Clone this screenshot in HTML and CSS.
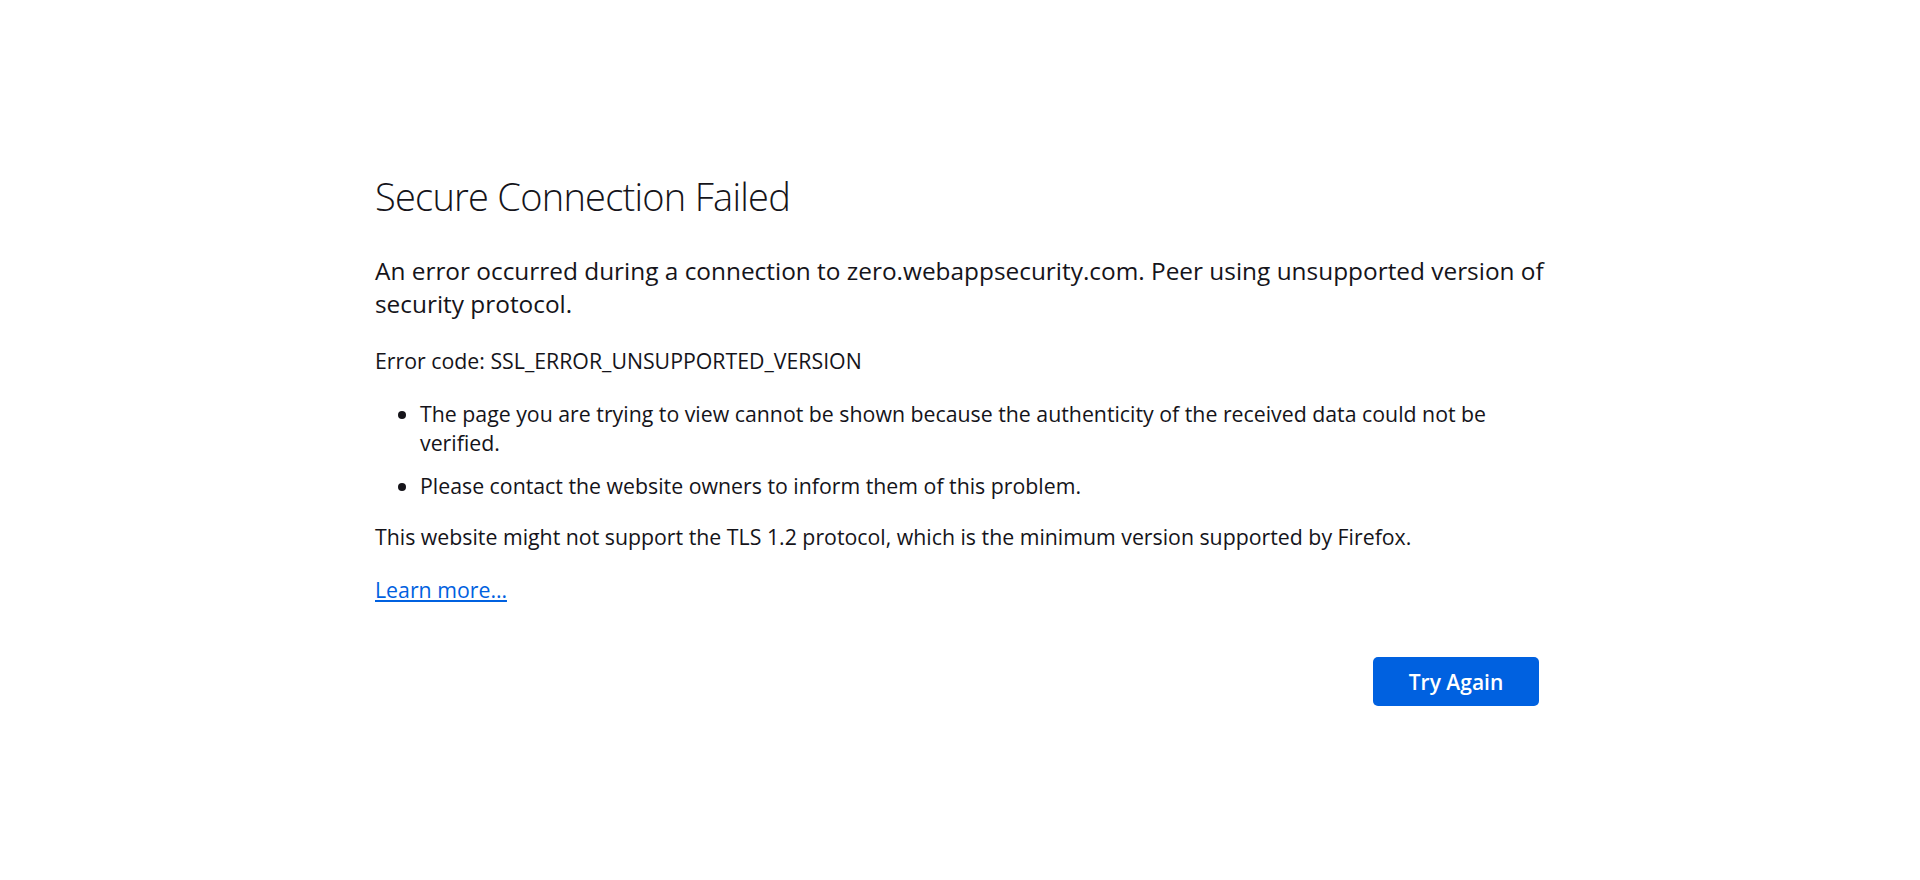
FILE: index.html
```html
<!DOCTYPE html>
<html lang="en">
<head>
<meta charset="utf-8">
<title>Secure Connection Failed</title>
<link rel="stylesheet" href="styles.css">
</head>
<body>
<div class="container">
  <h1 class="title">Secure Connection Failed</h1>
  <p class="intro">An error occurred during a connection to zero.webappsecurity.com. Peer using unsupported version of security protocol.</p>
  <p class="code">Error code: SSL_ERROR_UNSUPPORTED_VERSION</p>
  <ul class="list">
    <li>The page you are trying to view cannot be shown because the authenticity of the received data could not be verified.</li>
    <li>Please contact the website owners to inform them of this problem.</li>
  </ul>
  <p class="note">This website might not support the TLS 1.2 protocol, which is the minimum version supported by Firefox.</p>
  <p class="more"><a href="#" class="link">Learn more…</a></p>
  <div class="actions">
    <button class="btn">Try Again</button>
  </div>
</div>
</body>
</html>
```

FILE: styles.css
```css
html, body {
  margin: 0;
  padding: 0;
  background: #ffffff;
}
body {
  font-family: "Open Sans", "Noto Sans", sans-serif;
  color: #15141a;
  font-size: 21.3px;
}
.container {
  width: 1170px;
  margin: 0 auto;
  padding-top: 172px;
}
.title {
  font-size: 38px;
  font-weight: 300;
  letter-spacing: -0.75px;
  line-height: 48px;
  margin: 0 0 34px;
}
.intro {
  font-size: 24.4px;
  line-height: 33px;
  margin: 0 0 26px;
}
.code {
  line-height: 29px;
  margin: 0;
}
.list {
  margin: 24px 0 0;
  padding-left: 45px;
  line-height: 29px;
}
.list li + li {
  margin-top: 14px;
}
.note {
  line-height: 29px;
  margin: 22px 0 0;
}
.more {
  line-height: 29px;
  margin: 24px 0 0;
}
.link {
  color: #0061e0;
}
.actions {
  display: flex;
  justify-content: flex-end;
  padding-right: 6px;
  margin-top: 53px;
}
.btn {
  font-family: inherit;
  font-size: 21px;
  font-weight: 600;
  color: #ffffff;
  background: #0061e0;
  border: none;
  border-radius: 5px;
  width: 166px;
  height: 49px;
  padding: 0;
}
```
